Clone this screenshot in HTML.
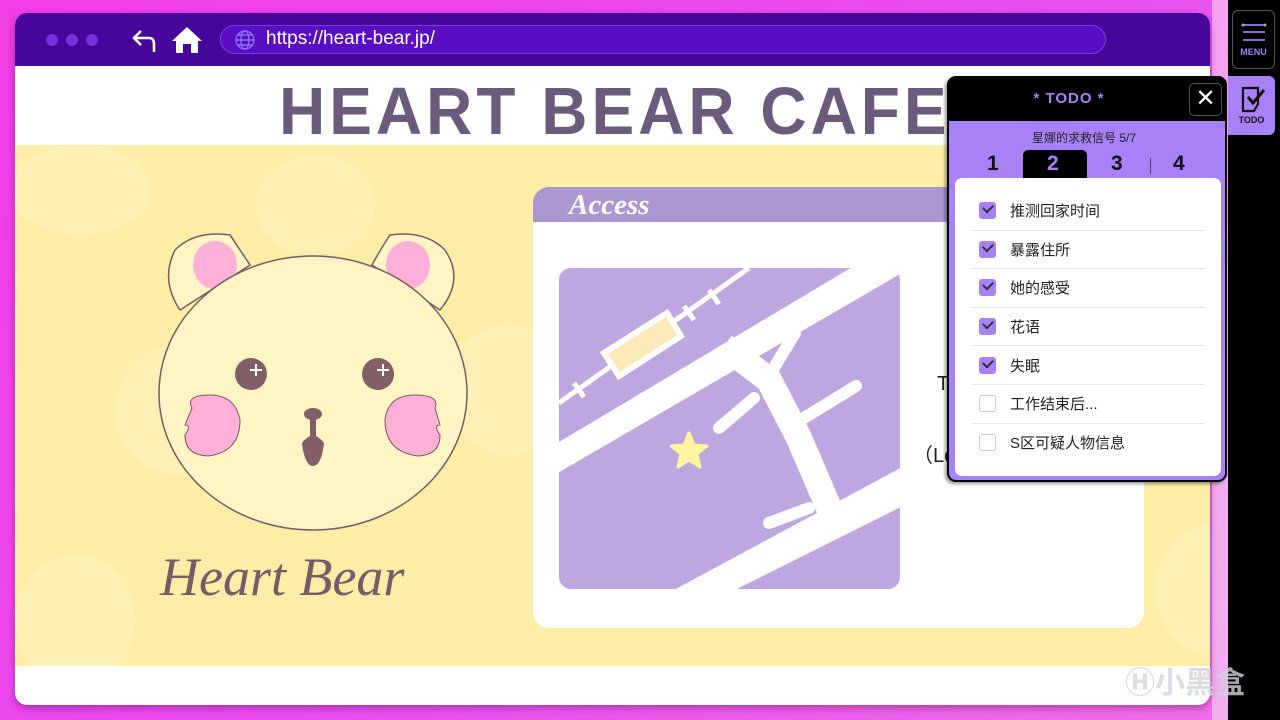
<!DOCTYPE html>
<html><head><meta charset="utf-8"><style>
*{margin:0;padding:0;box-sizing:border-box}
body{width:1280px;height:720px;overflow:hidden;position:relative;font-family:"Liberation Sans","Noto Sans CJK SC",sans-serif;background:linear-gradient(135deg,#f23ce6,#e84cf0 50%,#f070e8);}
.abs{position:absolute}
</style></head><body>
<div class="abs" style="left:1228px;top:0;width:52px;height:720px;background:#000"></div>
<div class="abs" style="left:1212px;top:0;width:16px;height:720px;background:linear-gradient(#f5a0f0,#f0b0f0)"></div>
<!-- window -->
<div class="abs" style="left:15px;top:13px;width:1195px;height:692px;border-radius:12px;overflow:hidden;background:#fff;box-shadow:0 3px 8px rgba(80,0,80,.4)">
 <div class="abs" style="left:0;top:0;width:1195px;height:53px;background:#46069a"></div>
 <div class="abs" style="left:31px;top:21px;width:12px;height:12px;border-radius:50%;background:#7a30e0"></div>
 <div class="abs" style="left:51px;top:21px;width:12px;height:12px;border-radius:50%;background:#7a30e0"></div>
 <div class="abs" style="left:71px;top:21px;width:12px;height:12px;border-radius:50%;background:#7a30e0"></div>
 <svg class="abs" style="left:116px;top:13px" width="28" height="28" viewBox="0 0 28 28"><path d="M10 5 L3 12 L10 19 M3 12 H18 Q23 12 23 18 V26" fill="none" stroke="#fff" stroke-width="2.6"/></svg>
 <svg class="abs" style="left:156px;top:12px" width="32" height="30" viewBox="0 0 32 30"><path d="M16 2 L31 16 H27 V28 H20 V19 H12 V28 H5 V16 H1 Z" fill="#fff"/></svg>
 <div class="abs" style="left:205px;top:12px;width:886px;height:29px;border-radius:15px;background:#5a0ec4;border:1.5px solid #7a3ae6"></div>
 <svg class="abs" style="left:219px;top:16px" width="22" height="22" viewBox="0 0 22 22" fill="none" stroke="#8a70ff" stroke-width="1.4"><circle cx="11" cy="11" r="9"/><ellipse cx="11" cy="11" rx="4" ry="9"/><path d="M2 11H20M4 6H18M4 16H18"/></svg>
 <div class="abs" style="left:251px;top:15px;color:#fff;font-size:19px">https://heart-bear.jp/</div>
 <div class="abs" style="left:264px;top:58px;color:#6a5b7c;font-size:64px;font-weight:bold;letter-spacing:4px;line-height:76px;white-space:nowrap;transform:scaleY(1.05);transform-origin:left top">HEART BEAR CAFE</div>
 <div class="abs" style="left:0;top:132px;width:1195px;height:521px;background:#fdeda6;overflow:hidden">
  <div class="abs" style="left:-5px;top:0;width:140px;height:90px;border-radius:50%;background:#fdf0b4"></div>
  <div class="abs" style="left:240px;top:10px;width:120px;height:100px;border-radius:50%;background:#fdf0b4"></div>
  <div class="abs" style="left:100px;top:200px;width:130px;height:130px;border-radius:50%;background:#fdf0b4"></div>
  <div class="abs" style="left:0;top:410px;width:120px;height:130px;border-radius:50%;background:#fdf0b4"></div>
  <div class="abs" style="left:430px;top:180px;width:130px;height:130px;border-radius:50%;background:#fdf0b4"></div>
  <div class="abs" style="left:1140px;top:380px;width:120px;height:130px;border-radius:50%;background:#fdf0b4"></div>
 </div>
</div>
<!-- bear -->
<svg class="abs" style="left:140px;top:220px" width="340" height="400" viewBox="0 0 340 400">
 <g stroke="#7a5a66" stroke-width="1.5">
 <path d="M40 90 Q20 60 35 30 Q55 10 90 15 Q100 30 110 45 Z" fill="#fff4c4"/>
 <path d="M300 90 Q325 60 305 30 Q285 10 250 15 Q240 30 232 45 Z" fill="#fff4c4"/>
 </g>
 <ellipse cx="75" cy="45" rx="22" ry="24" fill="#ffb0d8"/>
 <ellipse cx="268" cy="45" rx="22" ry="24" fill="#ffb0d8"/>
 <ellipse cx="173" cy="173" rx="154" ry="137" fill="#fff4c4" stroke="#7a5a66" stroke-width="1.5"/>
 <path d="M52 188 Q45 175 70 175 Q95 175 100 200 Q100 232 68 236 Q45 235 45 215 Q52 205 45 205 Z" fill="#ffb0d8" stroke="#7a5a66" stroke-width="1"/>
 <path d="M295 188 Q300 175 275 175 Q248 175 245 200 Q245 232 278 236 Q300 235 300 215 Q293 205 300 205 Z" fill="#ffb0d8" stroke="#7a5a66" stroke-width="1"/>
 <circle cx="111" cy="154" r="16" fill="#825e66"/><circle cx="238" cy="154" r="16" fill="#825e66"/>
 <path d="M116 144v12M110 150h12M243 144v12M237 150h12" stroke="#fff" stroke-width="2"/>
 <ellipse cx="173" cy="194" rx="9" ry="6" fill="#825e66"/>
 <path d="M170 198h6v18q8 5 8 8q-3 22-11 22q-8 0-11-22q0-3 8-8z" fill="#825e66"/>
 <text x="20" y="375" font-family="Liberation Serif,serif" font-style="italic" font-size="54" fill="#7a5a66">Heart Bear</text>
</svg>
<!-- access card -->
<div class="abs" style="left:533px;top:187px;width:611px;height:441px;background:#fff;border-radius:16px;overflow:hidden">
 <div class="abs" style="left:0;top:0;width:611px;height:35px;background:#ab96d0"></div>
 <div class="abs" style="left:36px;top:2px;color:#fff;font-family:'Liberation Serif',serif;font-style:italic;font-weight:bold;font-size:29px">Access</div>
 <div class="abs" style="left:404px;top:186px;font-size:20px;color:#222">T</div>
 <div class="abs" style="left:380px;top:252px;font-size:20px;color:#222">（Lo</div>
</div>
<svg class="abs" style="left:559px;top:268px" width="341" height="321" viewBox="0 0 341 321">
 <defs><clipPath id="c"><rect width="341" height="321" rx="12"/></clipPath></defs>
 <g clip-path="url(#c)">
 <rect width="341" height="321" fill="#bea6e0"/>
 <path d="M-10 180 L300 -5 L360 -5 L-10 210Z" fill="#fff"/>
 <path d="M0 135 L190 0" stroke="#fff" stroke-width="5"/>
 <path d="M15 115l10 14M95 60l10 14M125 38l10 14M150 22l10 14" stroke="#fff" stroke-width="5"/>
 <path d="M45 85 L108 45 L122 68 L60 108Z" fill="#fde8b8" stroke="#fff" stroke-width="6"/>
 <path d="M165 78 L210 112 L240 170 L270 240" stroke="#fff" stroke-width="26" fill="none"/>
 <path d="M210 108 L236 65M245 150 L297 118M195 130 L160 160M210 255 L250 240" stroke="#fff" stroke-width="12" stroke-linecap="round"/>
 <path d="M100 330 L360 190 L360 230 L160 330Z" fill="#fff"/>
 <path d="M130 165 l5 12 13 1-10 8 3 13-11-7-11 7 3-13-10-8 13-1z" fill="#fdf5a0" stroke="#fdf5a0" stroke-width="3" stroke-linejoin="round"/>
 </g>
</svg>
<!-- menu -->
<div class="abs" style="left:1232px;top:10px;width:43px;height:59px;border:1.5px solid #555;border-radius:6px;background:#000"></div>
<svg class="abs" style="left:1241px;top:22px" width="26" height="22"><path d="M2 3H24M2 10H24M2 18H24" stroke="#8a6ad0" stroke-width="2"/><circle cx="2" cy="3" r="1.5" fill="#aaa"/><circle cx="24" cy="3" r="1.5" fill="#aaa"/></svg>
<div class="abs" style="left:1232px;top:47px;width:43px;text-align:center;color:#a080f0;font-size:9px;font-weight:bold">MENU</div>
<div class="abs" style="left:1228px;top:76px;width:47px;height:59px;background:#a880f8;border-radius:0 6px 6px 0"></div>
<svg class="abs" style="left:1240px;top:86px" width="26" height="28"><path d="M3 2H18V18L14 25H3Z" fill="none" stroke="#111" stroke-width="2.2"/><path d="M8 11L13 17L24 4" fill="none" stroke="#111" stroke-width="3"/></svg>
<div class="abs" style="left:1228px;top:115px;width:47px;text-align:center;color:#111;font-size:9px;font-weight:bold">TODO</div>
<!-- todo panel -->
<div class="abs" style="left:947px;top:76px;width:280px;height:406px;background:#a880f8;border:2px solid #000;border-radius:9px;overflow:hidden;box-shadow:-2px 2px 3px rgba(0,0,0,.4)">
 <div class="abs" style="left:0;top:0;width:280px;height:43px;background:#000"></div>
 <div class="abs" style="left:0;top:12px;width:240px;text-align:center;color:#a880f8;font-size:15px;font-weight:bold;letter-spacing:1px">* TODO *</div>
 <div class="abs" style="left:240px;top:5px;width:33px;height:33px;border:1.5px solid #555;border-radius:5px;color:#fff;font-size:24px;text-align:center;line-height:29px">✕</div>
 <div class="abs" style="left:0;top:51px;width:270px;text-align:center;color:#222;font-size:12px">星娜的求救信号 5/7</div>
 <div class="abs" style="left:74px;top:72px;width:64px;height:30px;background:#000;border-radius:5px 5px 0 0"></div>
 <div class="abs" style="left:38px;top:74px;font-size:21px;font-weight:bold;color:#111">1</div>
 <div class="abs" style="left:98px;top:74px;font-size:21px;font-weight:bold;color:#a880f8">2</div>
 <div class="abs" style="left:162px;top:74px;font-size:21px;font-weight:bold;color:#111">3</div>
 <div class="abs" style="left:201px;top:80px;width:1px;height:16px;background:#444"></div>
 <div class="abs" style="left:224px;top:74px;font-size:21px;font-weight:bold;color:#111">4</div>
 <div class="abs" style="left:6px;top:100px;width:266px;height:298px;background:#fff;border-radius:7px">
  <div style="padding-top:14px;padding-left:17px;width:250px">
   <style>.r{height:38.6px;border-bottom:1px solid #e4e4e4;display:flex;align-items:center;font-size:15px;color:#222}.r:last-child{border:0}.cb{width:17px;height:17px;border-radius:3px;margin:0 14px 0 7px;background:#a880f8;position:relative}.cb.o{background:#fff;border:1px solid #ccc}.cb:not(.o)::after{content:"";position:absolute;left:4px;top:2px;width:8px;height:5px;border-left:2px solid #333;border-bottom:2px solid #333;transform:rotate(-45deg)}</style>
   <div class="r"><span class="cb"></span>推测回家时间</div>
   <div class="r"><span class="cb"></span>暴露住所</div>
   <div class="r"><span class="cb"></span>她的感受</div>
   <div class="r"><span class="cb"></span>花语</div>
   <div class="r"><span class="cb"></span>失眠</div>
   <div class="r"><span class="cb o"></span>工作结束后...</div>
   <div class="r"><span class="cb o"></span>S区可疑人物信息</div>
  </div>
 </div>
</div>
<div class="abs" style="left:1125px;top:658px;color:rgba(210,210,220,.8);font-size:30px;font-weight:bold;white-space:nowrap">Ⓗ小黑盒</div>
</body></html>
